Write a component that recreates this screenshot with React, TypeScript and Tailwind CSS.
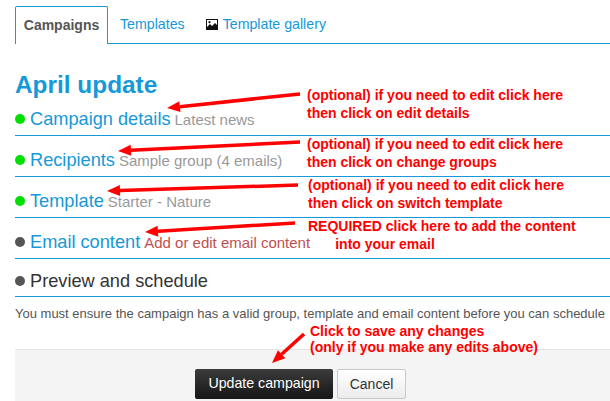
const font = { fontFamily: '"Liberation Sans", Arial, sans-serif' };

function Row({ dot, title, sub, subClass, link = true, short }: { dot: string; title: string; sub?: string; subClass?: string; link?: boolean; short?: boolean }) {
  return (
    <div className={`flex items-center border-b border-[#1599d8] ${short ? "h-[38px] pt-[7px]" : "h-[41px] pt-[8px]"}`}>
      <span className={`mr-[5px] h-[10px] w-[10px] shrink-0 rounded-full ${dot}`} />
      <span className={`text-[18.2px] leading-[22px] ${link ? "text-[#1599d8]" : "text-[#333333]"}`}>{title}</span>
      {sub && <span className={`ml-[4px] pt-[2px] text-[15px] leading-[20px] ${subClass}`}>{sub}</span>}
    </div>
  );
}

function Note({ x, y, lines, tight }: { x: number; y: number; lines: string[]; tight?: boolean }) {
  return (
    <div className={`absolute whitespace-pre text-[14px] font-bold text-[#ff0000] ${tight ? "leading-[16px]" : "leading-[18px]"}`} style={{ left: x, top: y }}>
      {lines.map((l, i) => (
        <div key={i}>{l}</div>
      ))}
    </div>
  );
}

function Arrow({ x1, y1, x2, y2 }: { x1: number; y1: number; x2: number; y2: number }) {
  const a = Math.atan2(y2 - y1, x2 - x1);
  const len = 13;
  const w = 5.5;
  const bx = x2 - Math.cos(a) * len;
  const by = y2 - Math.sin(a) * len;
  const nx = -Math.sin(a);
  const ny = Math.cos(a);
  return (
    <>
      <line x1={x1} y1={y1} x2={bx} y2={by} stroke="#ff0000" strokeWidth={3.5} />
      <polygon points={`${x2},${y2} ${bx + nx * w},${by + ny * w} ${bx - nx * w},${by - ny * w}`} fill="#ff0000" />
    </>
  );
}

export default function App() {
  return (
    <div className="relative h-[401px] w-[610px] overflow-hidden bg-white pl-[15px]" style={font}>
      <div className="h-[44px] pt-[6px]">
        <div className="flex h-[38px] items-stretch border-b border-[#1599d8]">
          <div className="-mb-px flex w-[93px] items-center justify-center rounded-t-[2px] border border-b-0 border-[#1599d8] bg-white text-[14px] font-bold text-[#555555]">
            Campaigns
          </div>
          <div className="flex items-center pl-[12px] text-[14.2px] text-[#1599d8]">Templates</div>
          <div className="flex items-center pl-[21px] text-[14.2px] text-[#1599d8]">
            <svg width="12" height="11" viewBox="0 0 12 11" className="mr-[5px]">
              <rect width="12" height="11" fill="#111" />
              <rect x="1" y="1" width="10" height="9" fill="#fff" />
              <path d="M1 10V8l3-3 2 2 3-3 2 2v4z" fill="#111" />
              <circle cx="3.5" cy="3.2" r="1.1" fill="#111" />
            </svg>
            Template gallery
          </div>
        </div>
      </div>
      <h1 className="mt-[27px] text-[24.4px] font-bold leading-[28px] text-[#1599d8]">April update</h1>
      <div>
        <div className="flex h-[37px] items-center border-b border-[#1599d8] pt-[4px]">
          <span className="mr-[5px] h-[10px] w-[10px] shrink-0 rounded-full bg-[#00e000]" />
          <span className="text-[18.2px] leading-[22px] text-[#1599d8]">Campaign details</span>
          <span className="ml-[4px] pt-[2px] text-[15px] leading-[20px] text-[#999999]">Latest news</span>
        </div>
        <Row dot="bg-[#00e000]" title="Recipients" sub="Sample group (4 emails)" subClass="text-[#999999]" />
        <Row dot="bg-[#00e000]" title="Template" sub="Starter - Nature" subClass="text-[#999999]" />
        <Row dot="bg-[#555555]" title="Email content" sub="Add or edit email content" subClass="text-[#c05050]" />
        <Row dot="bg-[#555555]" title="Preview and schedule" link={false} short />
      </div>
      <p className="mt-[8px] whitespace-nowrap text-[13px] leading-[18px] text-[#555555]">
        You must ensure the campaign has a valid group, template and email content before you can schedule
      </p>
      <div className="mt-[26px] flex h-[52px] items-start justify-start gap-[4px] border-t border-[#e5e5e5] bg-[#f4f4f4] pl-[180px] pt-[19px]">
        <div className="flex h-[30px] w-[138px] items-center justify-center rounded-[2px] bg-gradient-to-b from-[#3c3c3c] to-[#161616] text-[14.2px] text-white">
          Update campaign
        </div>
        <div className="flex h-[30px] w-[69px] items-center justify-center rounded-[2px] border border-[#c8c8c8] bg-gradient-to-b from-white to-[#ececec] text-[14px] text-[#333333]">
          Cancel
        </div>
      </div>

      <svg className="pointer-events-none absolute left-0 top-0" width="610" height="401">
        <Arrow x1={300} y1={94} x2={167} y2={108} />
        <Arrow x1={300} y1={142} x2={118} y2={151} />
        <Arrow x1={298} y1={185} x2={107} y2={191} />
        <Arrow x1={295} y1={223} x2={145} y2={232} />
        <Arrow x1={304} y1={334} x2={272} y2={363} />
      </svg>
      <Note x={307} y={86} lines={["(optional) if you need to edit click here", "then click on edit details"]} />
      <Note x={307} y={135} lines={["(optional) if you need to edit click here", "then click on change groups"]} />
      <Note x={308} y={176} lines={["(optional) if you need to edit click here", "then click on switch template"]} />
      <Note x={308} y={217} lines={["REQUIRED click here to add the content", "       into your email"]} />
      <Note x={310} y={323} tight lines={["Click to save any changes", "(only if you make any edits above)"]} />
    </div>
  );
}
